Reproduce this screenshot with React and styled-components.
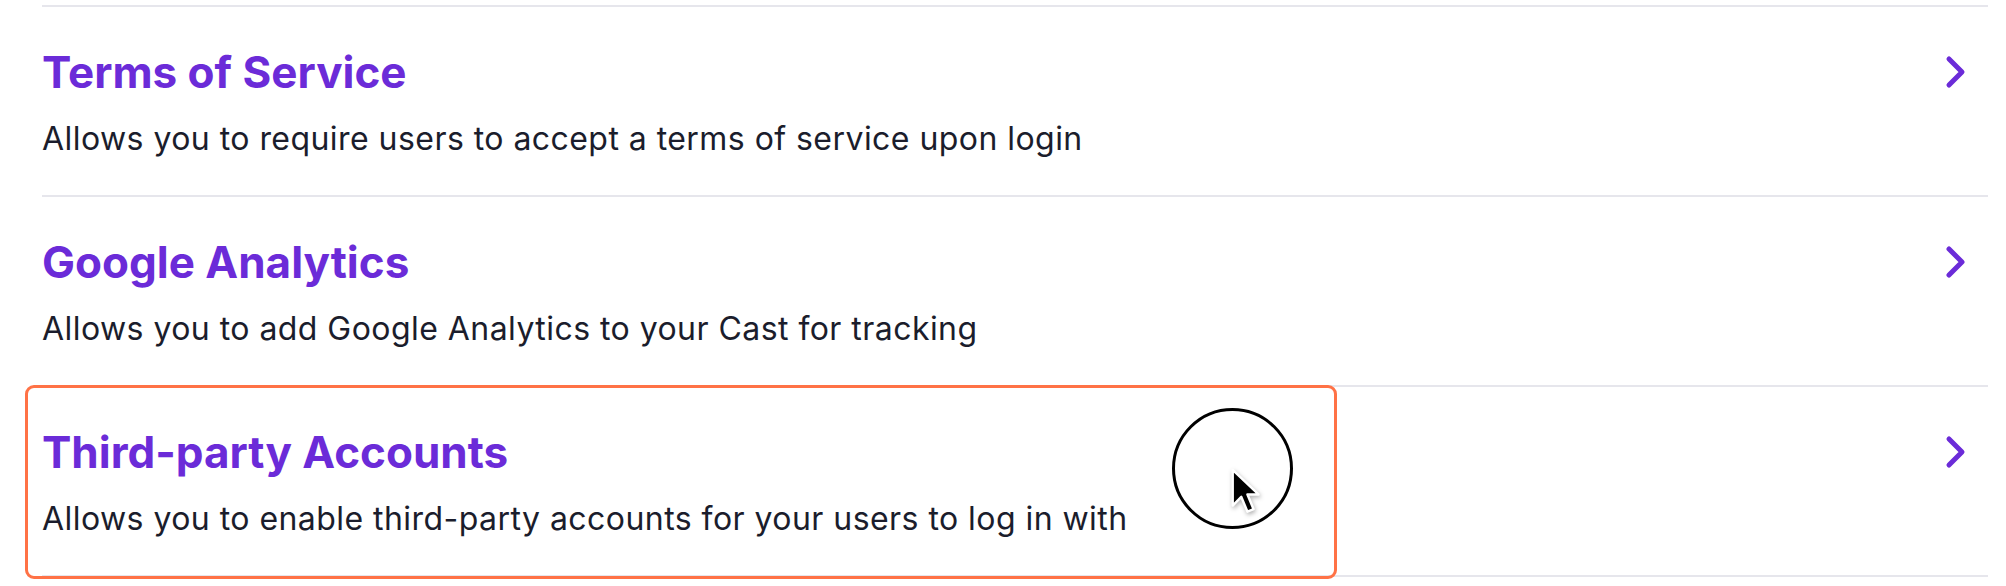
import styled, { createGlobalStyle } from "styled-components";

const GlobalStyle = createGlobalStyle`
  html, body {
    margin: 0;
    padding: 0;
    background: #ffffff;
  }
  body {
    font-family: "Inter", "Liberation Sans", sans-serif;
    overflow: hidden;
  }
`;

const Page = styled.div`
  width: 2006px;
  height: 586px;
  box-sizing: border-box;
  padding: 5px 18px 0 42px;
`;

const SettingsList = styled.div`
  display: flex;
  flex-direction: column;
  border-bottom: 2px solid #e6e6ec;
`;

const Row = styled.div`
  position: relative;
  display: flex;
  flex-direction: column;
  gap: 21px;
  height: 190px;
  box-sizing: border-box;
  padding: 39px 0 36px 0;
  border-top: 2px solid #e6e6ec;
`;

const RowHeader = styled.div`
  display: flex;
  align-items: center;
  justify-content: space-between;
  padding-right: 20px;
`;

const Title = styled.h2`
  margin: 0;
  font-family: "Inter", "Lato", sans-serif;
  font-weight: 700;
  font-size: 44px;
  line-height: 52px;
  color: #6b2bd8;
`;

const Description = styled.p`
  margin: 0;
  font-family: "Inter", "Liberation Sans", sans-serif;
  font-size: 32px;
  line-height: 40px;
  letter-spacing: 0.45px;
  color: #1b1d2c;
`;

const Highlight = styled.div`
  position: absolute;
  left: -17px;
  top: -2px;
  width: 1312px;
  height: 194px;
  box-sizing: border-box;
  border: 3px solid #ff7246;
  border-radius: 9px;
  pointer-events: none;
`;

const CursorRing = styled.div`
  position: absolute;
  left: 1130px;
  top: 21px;
  width: 121px;
  height: 121px;
  box-sizing: border-box;
  border: 3.5px solid #000;
  border-radius: 50%;
`;

const CursorArrow = styled.svg`
  position: absolute;
  left: 1187px;
  top: 80px;
  filter: drop-shadow(1px 2px 2px rgba(0, 0, 0, 0.3));
`;

const Chevron = () => (
  <svg width="24" height="36" viewBox="0 0 24 36">
    <polyline
      points="5,5 18,18 5,31"
      fill="none"
      stroke="#6b2bd8"
      strokeWidth="5"
      strokeLinecap="round"
      strokeLinejoin="round"
    />
  </svg>
);

const settings = [
  {
    title: "Terms of Service",
    text: "Allows you to require users to accept a terms of service upon login",
  },
  {
    title: "Google Analytics",
    text: "Allows you to add Google Analytics to your Cast for tracking",
  },
  {
    title: "Third-party Accounts",
    text: "Allows you to enable third-party accounts for your users to log in with",
    active: true,
  },
];

const App = () => {
  return (
    <Page>
      <GlobalStyle />
      <SettingsList>
        {settings.map((item) => (
          <Row key={item.title}>
            <RowHeader>
              <Title>{item.title}</Title>
              <Chevron />
            </RowHeader>
            <Description>{item.text}</Description>
            {item.active && (
              <>
                <Highlight />
                <CursorRing />
                <CursorArrow width="32" height="50" viewBox="0 0 26 40">
                  <path
                    d="M3 2 L3 31 L10 24 L15 36 L20 34 L15 22 L24 22 Z"
                    fill="#000"
                    stroke="#fff"
                    strokeWidth="2"
                    strokeLinejoin="round"
                  />
                </CursorArrow>
              </>
            )}
          </Row>
        ))}
      </SettingsList>
    </Page>
  );
};

export default App;
